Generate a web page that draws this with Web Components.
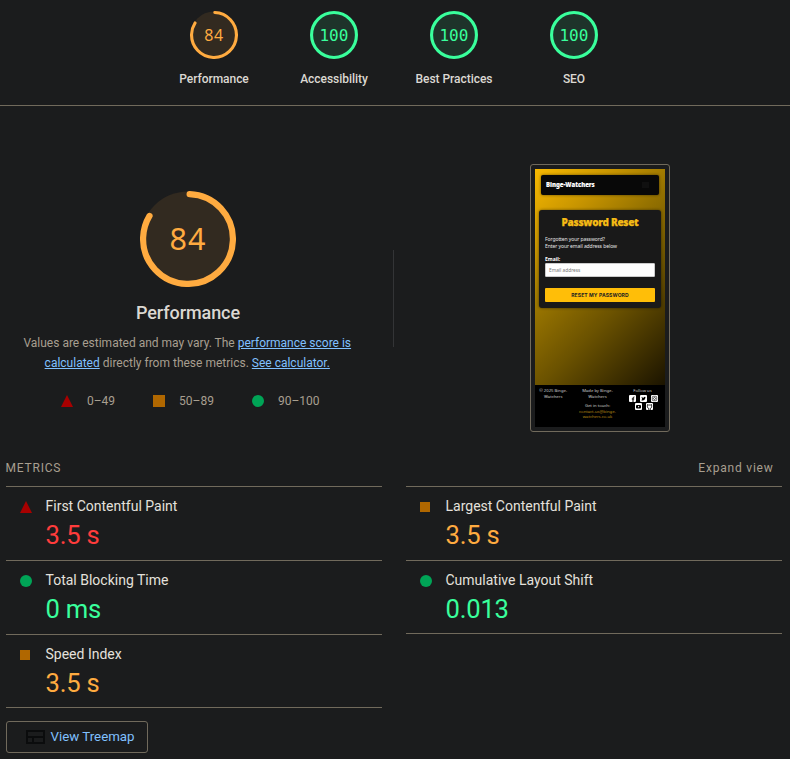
<!DOCTYPE html>
<html lang="en">
<head>
<meta charset="utf-8">
<title>Lighthouse report</title>
<style>
html,body{margin:0;background:#1b1c1d}
body{width:790px;height:759px;overflow:hidden;font-family:Roboto,"Liberation Sans",sans-serif;color:#dfdcd6}
</style>
</head>
<body>
<lh-report></lh-report>
<script>
const define = (name, render) => customElements.define(name, class extends HTMLElement {
  connectedCallback() {
    if (!this.shadowRoot) this.attachShadow({mode: 'open'}).innerHTML = render(this);
  }
});
const tones = {fail: '#ff3c3c', average: '#ffab40', pass: '#39ff9c'};

define('lh-mark', el => {
  const shapes = {
    fail: '<path fill="#a80000" d="M6 0l6 12H0z"/>',
    average: `<path fill="#b06700" d="M0 0h${el.hasAttribute('small') ? 10 : 12}v${el.hasAttribute('small') ? 10 : 12}H0z"/>`,
    pass: '<circle fill="#00a456" cx="6" cy="6" r="6"/>'
  };
  return `<style>:host{display:block;width:12px;height:12px;flex:none}svg{display:block}</style>
  <svg width="12" height="12">${shapes[el.getAttribute('tone')]}</svg>`;
});

define('lh-gauge', el => {
  const score = +el.getAttribute('score');
  const big = el.hasAttribute('big');
  const size = big ? 96 : 48, w = big ? 6.2 : 3.1, r = size / 2 - w / 2, c = 2 * Math.PI * r;
  const color = score >= 90 ? tones.pass : tones.average;
  const fill = score >= 90 ? '#1e332a' : '#322a20';
  const dash = score >= 90 ? `${c}` : `${c * .84 - w * .5} ${c}`;
  const start = score >= 90 ? -90 : -90 + (w / 2) / r * 30;
  return `<style>
  :host{display:flex;flex-direction:column;align-items:center;width:${big ? 200 : 120}px}
  .dial{display:grid;width:${size}px;height:${size}px;place-items:center}
  .dial>*{grid-area:1/1}
  svg{display:block}
  .n{color:${color};font:${big ? '30.5px' : '16px'}/${size}px ${score === 100 ? '"DejaVu Sans Mono"' : '"Noto Sans"'},monospace;letter-spacing:${big ? '1px' : score === 100 ? '.1px' : '.6px'};margin-top:${big ? -2 : score === 100 ? 1 : 0}px;margin-bottom:${score === 100 ? -1 : 0}px}
  .l{font-weight:500;white-space:nowrap;color:#dbd8d2;font-size:${big ? '18px' : '12px'};line-height:20px;margin-top:${big ? 16 : 10}px;letter-spacing:${big ? '-.08px' : '-.04px'}}
  </style>
  <div class="dial"><svg width="${size}" height="${size}"><circle cx="${size/2}" cy="${size/2}" r="${size/2 - .5}" fill="${fill}"/>
  <circle cx="${size/2}" cy="${size/2}" r="${r}" fill="none" stroke="${color}" stroke-width="${w}" stroke-linecap="round" stroke-dasharray="${dash}" transform="rotate(${start} ${size/2} ${size/2})"/></svg>
  <span class="n">${score}</span></div><div class="l"><slot></slot></div>`;
});

define('lh-metric', el => `<style>
  :host{display:flex;box-sizing:border-box;height:74px;border-top:1px solid #716a5c;padding:0 0 0 14px}
  lh-mark{margin-top:${el.getAttribute('tone') === 'average' ? 15 : 14}px}
  .b{margin-left:13.5px;padding-top:9px}
  .t{font-size:14px;line-height:20px;color:#e4e1dc}
  .v{font-size:25.6px;line-height:36px;margin-top:1.4px;letter-spacing:-.2px;color:${tones[el.getAttribute('tone')]}}
  </style><lh-mark small tone="${el.getAttribute('tone')}"></lh-mark>
  <div class="b"><div class="t"><slot></slot></div><div class="v">${el.getAttribute('value')}</div></div>`);

define('lh-phone', () => `<style>
  :host{display:block;box-sizing:border-box;width:140px;height:268px;padding:4px;border:1px solid #716a5c;border-radius:3px;font-family:"Noto Sans",sans-serif;color:#e6e6e6}
  .s{display:flex;flex-direction:column;height:258px;background:linear-gradient(135deg,#f8b900 0%,#c89500 20%,#957200 38%,#6b5200 57%,#191200 90%);overflow:hidden}
  .nav{display:flex;align-items:center;justify-content:space-between;height:20px;margin:6px 6px 0;padding:0 10px 0 5px;box-sizing:border-box;background:#080808;border-radius:2px;box-shadow:0 0 3px #0008;font:900 6px/20px "Noto Sans",sans-serif;color:#fff;letter-spacing:-.02px;-webkit-text-stroke:.1px #fff}
  .card{box-sizing:border-box;height:98px;margin:15px 4px 0;padding:5px 6px 0;background:#191919;border-radius:3px;box-shadow:0 0 3px #0008;font-size:5px;line-height:7px}
  h1{margin:0 0 6px;font:900 10px/15px "Noto Sans",sans-serif;color:#f6bc15;text-align:center;letter-spacing:-.28px;white-space:nowrap;-webkit-text-stroke:.25px #f6bc15}
  .e{margin-top:5.5px;font-weight:700;color:#fff}
  .in{height:14px;box-sizing:border-box;background:#fff;border:1px solid #ccc;border-radius:1px;padding-left:3px;font-size:4.8px;line-height:12px;color:#777}
  .btn{margin-top:11px;height:14px;border-radius:1px;background:#ffbe08;color:#222;text-align:center;font:700 5px/14px Inter,sans-serif;letter-spacing:.12px}
  .m{letter-spacing:-.07px}
  footer{display:grid;grid-template-columns:36.5px 50px 38px;column-gap:1px;margin-top:auto;height:42px;box-sizing:border-box;padding:3px 0 0 0;background:#000;text-align:center;font-size:4.2px;line-height:6px;color:#ccc}
  .y{color:#b88914}.g{margin-top:3px;line-height:5.6px}
  .ic{display:flex;flex-wrap:wrap;justify-content:center;gap:1px 4px;margin:1px -1px 0 1px}
  </style><div class="s">
  <div class="nav"><span>Binge-Watchers</span><svg width="7" height="6" stroke="#202020" stroke-width=".7"><path d="M0 1h7M0 3h7M0 5h7"/></svg></div>
  <div class="card"><h1>Password Reset</h1><div class="m">Forgotten your password?</div><div class="m">Enter your email address below</div>
  <div class="e">Email:</div><div class="in">Email address</div><div class="btn">RESET MY PASSWORD</div></div>
  <footer><div>© 2025 Binge-<br>Watchers</div><div>Made by Binge-<br>Watchers<div class="g">Get in touch:<br><span class="y">contact-us@binge-<br>watchers.co.uk</span></div></div>
  <div>Follow us<div class="ic">
  <svg width="7" height="7"><rect width="7" height="7" rx="1" fill="#fff"/><path d="M4 7V3q0-1 1.4-1M2.8 4h2.4" fill="none" stroke="#000" stroke-width="1"/></svg>
  <svg width="7" height="7"><rect width="7" height="7" rx="1" fill="#fff"/><path d="M1.3 5.3q3.5 1 4.2-3L5 1.8l-1.3.5v.6L1.4 2l.8 2z" fill="#000"/></svg>
  <svg width="7" height="7"><rect width="7" height="7" rx="1" fill="#fff"/><rect x="1.3" y="1.3" width="4.4" height="4.4" rx="1" fill="none" stroke="#000" stroke-width=".6"/><circle cx="3.5" cy="3.5" r="1" fill="none" stroke="#000" stroke-width=".6"/></svg>
  <svg width="7" height="7"><rect width="7" height="7" rx="1" fill="#fff"/><rect x="1" y="2" width="5" height="3.4" rx="1" fill="#000"/><path d="M3 2.8l1.5.9L3 4.6z" fill="#fff"/></svg>
  <svg width="7" height="7"><rect width="7" height="7" rx="1" fill="#fff"/><path d="M2.8 7V5.500Q1.2 5 1.3 3.2L1.5 1.500l1 .5h2l1-.5.2 1.7Q5.800 5 4.300 5.500V7" fill="none" stroke="#000" stroke-width=".8"/></svg>
  </div></div></footer></div>`);

define('lh-report', () => `<style>
  :host{display:block;width:790px;height:759px}
  .top{display:flex;justify-content:center;box-sizing:border-box;height:106px;padding:11px 2px 0 0;width:790px;border-bottom:1px solid #716a5c}
  .hero{display:grid;grid-template-columns:393px 1px 396px;height:345px}
  .left{display:flex;flex-direction:column;align-items:center;padding:85px 17px 0 0}
  p{margin:10px 1.500px 0 0;font-size:12px;line-height:20px;color:#a89f90;text-align:center;white-space:nowrap;letter-spacing:0}
  a{color:#80c0ff;text-decoration:underline}
  .legend{display:flex;margin:18px 0 0 4.500px;gap:38px;font-size:12px;line-height:20px;color:#a89f90;letter-spacing:0}
  .legend span{display:flex;align-items:center;gap:14px}
  .div{height:97px;margin-top:144px;background:#333436}
  .right{display:flex;justify-content:center;padding-top:58px;padding-left:16px}
  .head{display:flex;justify-content:space-between;align-items:center;height:35px;padding:0 16.400px 0 5.500px;font-size:12px;line-height:35px;color:#a89f90;letter-spacing:.8px}
  .grid{display:grid;grid-template-columns:376px 376px;column-gap:24px;padding-left:6px}
  .col>lh-metric:last-child{border-bottom:1px solid #716a5c}
  button{display:flex;align-items:center;box-sizing:border-box;width:142px;height:32px;margin:13px 0 0 6px;padding:0 0 0 19px;background:none;border:1px solid #716a5c;border-radius:3px;font:450 13.300px/30px Roboto,sans-serif;white-space:nowrap;color:#80c0ff;letter-spacing:0}
  button svg{margin:0 5.500px 0 0}
  </style>
  <div class="top"><lh-gauge score="84">Performance</lh-gauge><lh-gauge score="100">Accessibility</lh-gauge><lh-gauge score="100">Best Practices</lh-gauge><lh-gauge score="100">SEO</lh-gauge></div>
  <div class="hero"><div class="left"><lh-gauge big score="84">Performance</lh-gauge>
  <p>Values are estimated and may vary. The <a>performance score is</a><br><a>calculated</a> directly from these metrics. <a>See calculator.</a></p>
  <div class="legend"><span><lh-mark tone="fail"></lh-mark>0–49</span><span><lh-mark tone="average"></lh-mark>50–89</span><span><lh-mark tone="pass"></lh-mark>90–100</span></div></div>
  <div class="div"></div><div class="right"><lh-phone></lh-phone></div></div>
  <div class="head"><span>METRICS</span><span>Expand view</span></div>
  <div class="grid"><div class="col"><lh-metric tone="fail" value="3.5 s">First Contentful Paint</lh-metric><lh-metric tone="pass" value="0 ms">Total Blocking Time</lh-metric><lh-metric tone="average" value="3.5 s">Speed Index</lh-metric></div>
  <div class="col"><lh-metric tone="average" value="3.5 s">Largest Contentful Paint</lh-metric><lh-metric tone="pass" value="0.013">Cumulative Layout Shift</lh-metric></div></div>
  <button><svg width="19" height="14"><path fill="#0b0c0d" fill-rule="evenodd" d="M0 0h19v14H0zM2 2v4h15V2zM2 8v4h4V8zM8 8v4h9V8z"/></svg>View Treemap</button>`);
</script>
</body>
</html>
